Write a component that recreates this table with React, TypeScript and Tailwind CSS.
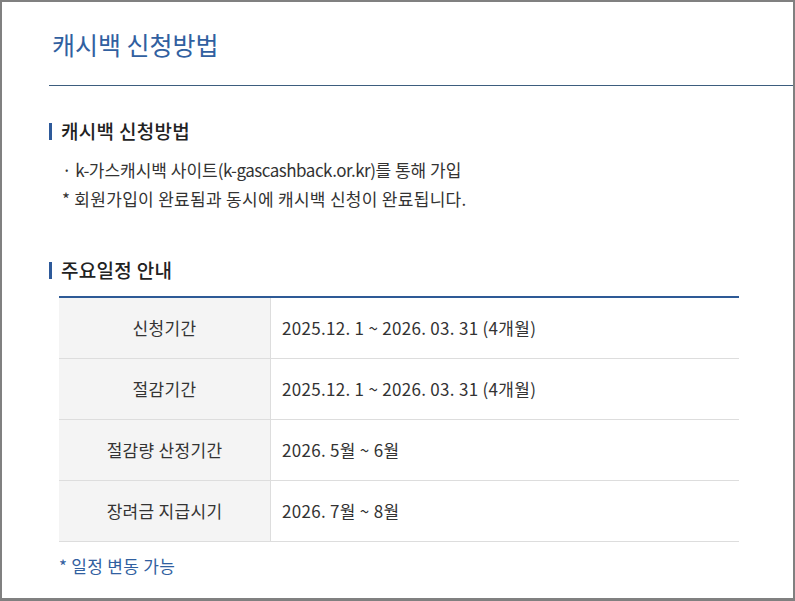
import React from "react";

const rows = [
  ["신청기간", "2025.12. 1 ~ 2026. 03. 31 (4개월)"],
  ["절감기간", "2025.12. 1 ~ 2026. 03. 31 (4개월)"],
  ["절감량 산정기간", "2026. 5월 ~ 6월"],
  ["장려금 지급시기", "2026. 7월 ~ 8월"],
];

function Heading({ children }: { children: React.ReactNode }) {
  return (
    <div className="flex items-center h-[26px]">
      <span className="w-[3px] h-[17px] bg-[#2e5a9a]" />
      <span className="ml-[9px] text-[19px] tracking-[0.3px] font-medium text-[#222]">{children}</span>
    </div>
  );
}

export default function App() {
  return (
    <div
      className="w-[795px] h-[601px] border-2 border-b-[3px] border-[#808080] bg-white overflow-hidden"
      style={{ fontFamily: "'Noto Sans CJK KR', 'Noto Sans', sans-serif" }}
    >
      <div className="pl-[47px]">
        <div className="h-[83px] flex items-center">
          <h1 className="pl-[3px] text-[25px] font-normal text-[#3160a0] leading-[36px]">캐시백 신청방법</h1>
        </div>
        <div className="h-px bg-[#3d5d7e]" />

        <div className="mt-[32px]">
          <Heading>캐시백 신청방법</Heading>
        </div>
        <div className="mt-[11px] pl-[13px] text-[17px] leading-[29px] text-[#333]">
          <p>
            · <span className="tracking-[-0.5px]">k-</span>가스캐시백 사이트
            <span className="tracking-[-0.5px]">(k-gascashback.or.kr)</span>를 통해 가입
          </p>
          <p className="tracking-[0.3px]">* 회원가입이 완료됨과 동시에 캐시백 신청이 완료됩니다.</p>
        </div>

        <div className="mt-[44px]">
          <Heading>주요일정 안내</Heading>
        </div>

        <div className="mt-[13px] ml-[10px] w-[680px] border-t-2 border-[#2e5a96]">
          {rows.map(([k, v]) => (
            <div key={k} className="flex h-[61px] border-b border-[#dddddd] text-[17px] tracking-[0.3px] text-[#333]">
              <div className="w-[212px] shrink-0 bg-[#f4f4f4] border-r border-[#dddddd] flex items-center justify-center">
                {k}
              </div>
              <div className="flex-1 flex items-center pl-[11px]">{v}</div>
            </div>
          ))}
        </div>

        <p className="mt-[12px] ml-[10px] text-[17px] tracking-[0.3px] leading-[24px] text-[#3160a0]">* 일정 변동 가능</p>
      </div>
    </div>
  );
}
